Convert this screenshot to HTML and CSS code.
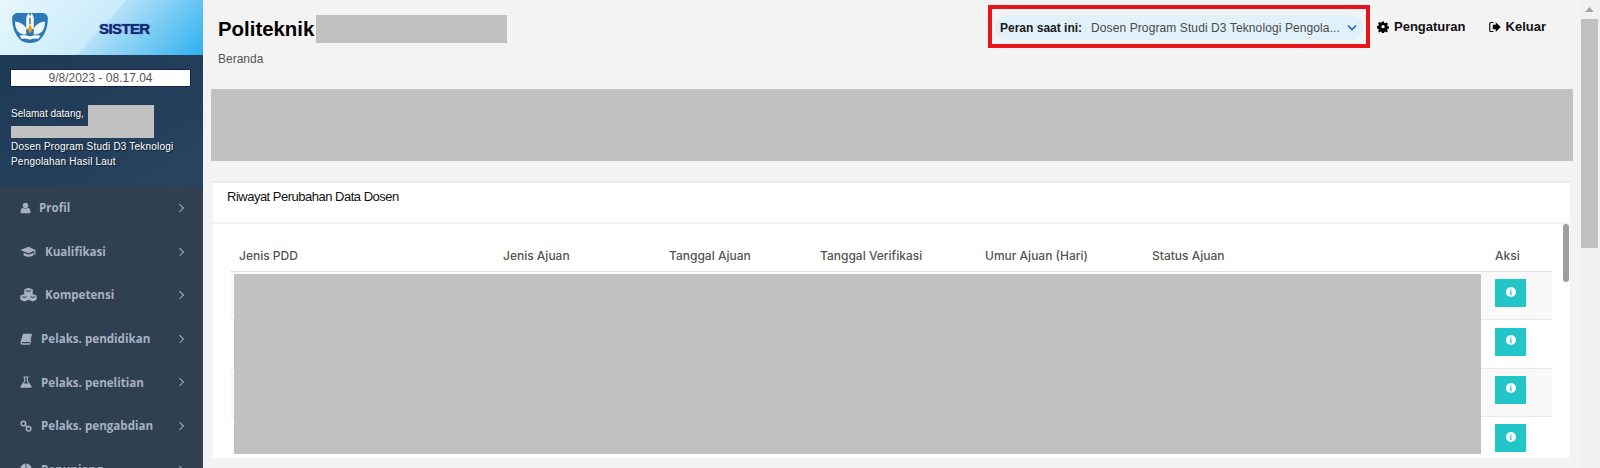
FILE: index.html
```html
<!DOCTYPE html>
<html lang="id">
<head>
<meta charset="utf-8">
<title>SISTER</title>
<link rel="stylesheet" href="styles.css">
</head>
<body>
<aside class="sidebar">
  <div class="brand">
    <svg class="logo" viewBox="0 0 40 34">
      <path fill="#2a78b8" d="M6 1h28q5 1 5 6 0 14-8 22-4 4-11 4T9 29Q1 21 1 7q0-5 5-6z"/>
      <path fill="#f4f6f0" d="M18 1l2 3 2-3 2 5v12h-8V6z"/>
      <path fill="#1f4f80" d="M19.400 6h1.200v7h-1.200z"/>
      <path fill="#eef4f8" d="M4 10q7 0 12 7v7q-7 0-10-5-2-4-2-9zM36 10q-7 0-12 7v7q7 0 10-5 2-4 2-9z"/>
      <path fill="#f0a020" d="M20 13l2.500 5-2.500 5-2.500-5z"/>
      <path fill="#fff" d="M9 25q6-1 11 1 5-2 11-1l-2 3.500q-5-1-9 1-4-2-9-1z"/>
    </svg>
    <span class="brand-name">SISTER</span>
  </div>
  <div class="user-panel">
    <div class="clock">9/8/2023 - 08.17.04</div>
    <div class="welcome">Selamat datang,<span class="redact redact-name"></span></div>
    <div class="redact redact-name2"></div>
    <div class="role">Dosen Program Studi D3 Teknologi Pengolahan Hasil Laut</div>
  </div>
  <nav class="menu">
    <a class="item"><svg class="ic" viewBox="0 0 16 16"><circle cx="8" cy="4.500" r="4"/><path d="M1 15.500V12q0-4 3.500-4.500 3.500 2.500 7 0Q15 8 15 12v3.500z"/></svg><span class="lbl l1">Profil</span><span class="chev"></span></a>
    <a class="item"><svg class="ic wide" viewBox="0 0 20 16"><path d="M10 2L0 6l10 4 7-3v5h1.500V6zM4 9.500V13q6 3 12 0V9.500l-6 2.500z"/></svg><span class="lbl l2">Kualifikasi</span><span class="chev"></span></a>
    <a class="item"><svg class="ic wide cubes" viewBox="0 0 20 16"><path d="M10 .2l5 1.900v5.200l-5 1.900-5-1.900V2.100zM5.200 7.500l4.800 1.800v5l-4.800 1.800L.4 14.300v-5zM14.800 7.500l4.800 1.800v5l-4.800 1.800-4.800-1.800v-5z"/><path d="M7 3.300l3 1.100 3-1.100M2.500 10.500l2.700 1 2.700-1M12 10.500l2.800 1 2.800-1" fill="none" stroke="#2f4050" stroke-width="1.200"/></svg><span class="lbl l2b">Kompetensi</span><span class="chev"></span></a>
    <a class="item"><svg class="ic" viewBox="0 0 16 16"><path d="M4 1h12l-2.500 11H3.500q-1 0-1 .8t1 .7H13l1-3 1.500-.5L13 15.500H3Q0.300 15.500 .8 12z"/></svg><span class="lbl l3">Pelaks. pendidikan</span><span class="chev"></span></a>
    <a class="item"><svg class="ic" viewBox="0 0 16 16"><path d="M4.500 .5h7V2h-1v4.500l5 7.500q.5 1.500-1 1.500H1.500q-1.500 0-1-1.500l5-7.500V2h-1zM7 2v5l-2 3h6L9 7V2z" fill-rule="evenodd"/></svg><span class="lbl l3">Pelaks. penelitian</span><span class="chev"></span></a>
    <a class="item"><svg class="ic" viewBox="0 0 16 16"><g fill="none" stroke="currentColor" stroke-width="2"><circle cx="4.500" cy="4.500" r="3"/><circle cx="11.500" cy="11.500" r="3"/><path d="M6.500 6.500l3 3"/></g></svg><span class="lbl l3">Pelaks. pengabdian</span><span class="chev"></span></a>
    <a class="item"><svg class="ic" viewBox="0 0 16 16"><circle cx="8" cy="8" r="7.500"/><path d="M1 8h14M8 1v14" stroke="#2f4050" fill="none"/></svg><span class="lbl l3">Penunjang</span><span class="chev"></span></a>
  </nav>
</aside>

<main class="main">
  <header class="topbar">
    <div class="titles">
      <h1 class="title">Politeknik<span class="redact redact-title"></span></h1>
      <div class="crumb">Beranda</div>
    </div>
    <div class="actions">
      <div class="role-outline">
        <div class="role-pill">
          <b class="role-label">Peran saat ini:</b>
          <span class="role-value">Dosen Program Studi D3 Teknologi Pengola...</span>
          <svg class="role-chev" viewBox="0 0 10 6"><path d="M1 1l4 4 4-4" fill="none" stroke="#1b6fc2" stroke-width="1.600"/></svg>
        </div>
      </div>
      <a class="action"><svg class="act-ic" viewBox="0 0 16 16"><path d="M6.700 1h2.600l.4 2 1.300.6 1.800-1.100 1.800 1.800-1.100 1.800.6 1.300 2 .4v2.600l-2 .4-.6 1.300 1.100 1.800-1.800 1.800-1.800-1.100-1.300.6-.4 2H6.700l-.4-2-1.300-.6-1.800 1.100-1.800-1.800 1.100-1.800-.6-1.300-2-.4V7.100l2-.4.6-1.300-1.100-1.800 1.800-1.800L5 2.900l1.300-.6zM8 5.700a2.300 2.300 0 100 4.600 2.300 2.300 0 000-4.600z" fill-rule="evenodd" transform="translate(0 -.5)"/></svg>Pengaturan</a>
      <a class="action"><svg class="act-ic" viewBox="0 0 16 16"><path d="M9 4V1.500l6.500 6.500L9 14.500V11H5V5h4z"/><path d="M6 2H2.500Q1 2 1 3.500v9Q1 14 2.500 14H6" fill="none" stroke="#000" stroke-width="1.500"/></svg>Keluar</a>
    </div>
  </header>

  <div class="banner redact"></div>

  <section class="card">
    <h2 class="card-title">Riwayat Perubahan Data Dosen</h2>
    <div class="card-body">
      <div class="grid-table">
        <div class="row head">
          <span class="c1">Jenis PDD</span><span class="c2">Jenis Ajuan</span><span class="c3">Tanggal Ajuan</span><span class="c4">Tanggal Verifikasi</span><span class="c5">Umur Ajuan (Hari)</span><span class="c6">Status Ajuan</span><span class="c7">Aksi</span>
        </div>
        <div class="row odd"><span class="c8"></span><a class="info"><span class="info-i">i</span></a></div>
        <div class="row"><span class="c8"></span><a class="info"><span class="info-i">i</span></a></div>
        <div class="row odd"><span class="c8"></span><a class="info"><span class="info-i">i</span></a></div>
        <div class="row"><span class="c8"></span><a class="info"><span class="info-i">i</span></a></div>
        <div class="redact table-redact"></div>
      </div>
      <div class="inner-thumb"></div>
    </div>
  </section>
</main>

<div class="page-scroll">
  <svg class="arrow" viewBox="0 0 10 6"><path d="M5 0l5 6H0z" fill="#a3a3a3"/></svg>
  <div class="page-thumb"></div>
</div>
</body>
</html>
```
FILE: styles.css
```css
* { box-sizing: border-box; }
html, body { margin: 0; height: 468px; overflow: hidden; }
body {
  display: flex;
  background: #f3f3f4;
  font-family: "Liberation Sans", Arial, sans-serif;
  color: #000;
}
.redact { background: #c1c1c1; }

/* sidebar */
.sidebar {
  width: 203px;
  flex: none;
  height: 468px;
  overflow: hidden;
  background: #2f4050;
}
.brand {
  height: 55px;
  display: flex;
  align-items: center;
  padding: 0 0 0 11px;
  background: linear-gradient(132deg, #e8f7fd 0%, #c9ebfa 50%, #b4e1f8 50.3%, #2eb0ee 100%);
}
.logo { width: 38px; height: 32px; }
.brand-name {
  margin-left: 50px;
  margin-top: 1px;
  font-size: 15px;
  font-weight: 700;
  letter-spacing: -0.6px;
  color: #1a2a78;
  text-shadow: 0 0 1px #1a2a78;
}
.user-panel {
  height: 131px;
  padding: 14px 10px 0 10px;
  background: linear-gradient(150deg, #1f3a55 0%, #233f5c 60%, #2a4562 100%);
  color: #fff;
  font-size: 10px;
  line-height: 15px;
  text-shadow: 1px 1px 1px rgba(0, 0, 0, .6);
}
.clock {
  height: 18px;
  width: 181px;
  background: #fff;
  border: 1px solid #12264a;
  color: #555;
  font-size: 12px;
  line-height: 16px;
  text-align: center;
  text-shadow: none;
}
.welcome {
  display: flex;
  align-items: flex-start;
  margin-top: 18px;
  padding-left: 1px;
  height: 21px;
  line-height: 17px;
}
.redact-name { width: 66px; height: 21px; margin-left: 4px; }
.redact-name2 { width: 143px; height: 12px; margin-left: 1px; }
.role { margin: 1px 0 0 1px; width: 176px; letter-spacing: .2px; }

.menu { padding-top: 0; }
.item {
  display: flex;
  align-items: center;
  height: 43.6px;
  padding-left: 20px;
  position: relative;
  color: #a7b1c2;
  font-family: "Open Sans", "Noto Sans", sans-serif;
  font-size: 11.6px;
  font-weight: 700;
  white-space: nowrap;
}
.ic { width: 11px; height: 12px; fill: currentColor; flex: none; }
.ic.wide { width: 17px; height: 13px; }
.ic.cubes { width: 17px; height: 15px; }
.lbl { margin-left: 8px; }
.l2 { margin-left: 8px; }
.l2b { margin-left: 8px; }
.l3 { margin-left: 9px; }
.item:nth-child(4) .ic, .item:nth-child(5) .ic, .item:nth-child(6) .ic, .item:nth-child(7) .ic { width: 12px; }
.chev {
  position: absolute;
  right: 21px;
  top: 19px;
  width: 5.5px;
  height: 5.5px;
  border-top: 1px solid #a7b1c2;
  border-right: 1px solid #a7b1c2;
  transform: rotate(45deg);
}

/* main */
.main {
  flex: 1;
  min-width: 0;
  padding: 0 6px 0 8px;
  display: flex;
  flex-direction: column;
}
.topbar {
  height: 89px;
  display: flex;
  justify-content: space-between;
  align-items: flex-start;
  flex: none;
  padding-left: 7px;
}
.titles { padding-top: 15px; }
.title {
  margin: 0;
  display: flex;
  align-items: center;
  height: 28px;
  font-size: 20.4px;
  font-weight: 700;
  line-height: 28px;
}
.redact-title { width: 191px; height: 28px; margin-left: 2px; }
.crumb { margin-top: 9px; font-size: 12px; line-height: 14px; color: #555; }
.actions { display: flex; align-items: center; padding-top: 5px; margin-right: 27px; }
.role-outline {
  width: 382px;
  height: 43px;
  padding: 6px 3px;
  border: 4px solid #e8141c;
}
.role-pill {
  display: flex;
  align-items: center;
  height: 25px;
  padding: 0 5px;
  border-radius: 13px;
  background: #e1f1f9;
  font-size: 12px;
  white-space: nowrap;
}
.role-label { color: #1a1a1a; }
.role-value { margin-left: 9px; color: #4a4a4a; letter-spacing: .1px; }
.role-chev { width: 10px; height: 7px; margin-left: auto; margin-right: 1px; }
.action {
  display: flex;
  align-items: center;
  margin-left: 7px;
  font-size: 13px;
  font-weight: 700;
  color: #111;
}
.action + .action { margin-left: 23px; }
.act-ic { width: 12px; height: 12px; margin-right: 5px; fill: #000; }

.banner { height: 72px; flex: none; }

.card {
  margin: 20px 0 0 2px;
  width: 1357px;
  height: 277px;
  flex: none;
  position: relative;
  background: #fff;
  border-top: 2px solid #e7eaec;
}
.card-title {
  margin: 0;
  height: 41px;
  padding: 6px 14px 0;
  border-bottom: 2px solid #f3f3f3;
  font-size: 13px;
  font-weight: 400;
  letter-spacing: -.5px;
  line-height: 16px;
  color: #111;
}
.card-body { position: relative; padding: 0 18px; height: 234px; overflow: hidden; }
.grid-table { position: relative; width: 1321px; }
.row {
  display: flex;
  align-items: center;
  height: 48.4px;
  border-bottom: 1px solid #e7eaec;
  font-family: "Inter", "Noto Sans", sans-serif;
  font-size: 12px;
  color: #555;
}
.row.odd { background: #f9f9f9; }
.row.head {
  height: 48px;
  padding-top: 15px;
  font-weight: 500;
  border-bottom: 1px solid #dcdcdc;
}
.row.head span { flex: none; }
.c1 { width: 272px; padding-left: 8px; }
.c2 { width: 166px; }
.c3 { width: 151px; }
.c4 { width: 165px; }
.c5 { width: 167px; }
.c6 { width: 343px; }
.c7 { width: 46px; }
.c8 { width: 1264px; }
.info {
  width: 31px;
  height: 28px;
  margin-top: -5px;
  background: #23c6c8;
  display: flex;
  align-items: center;
  justify-content: center;
}
.info-i {
  width: 10px;
  height: 10px;
  margin-top: -3px;
  border-radius: 50%;
  background: #fff;
  color: #23c6c8;
  font: 700 9px/10px "Liberation Serif", serif;
  text-align: center;
}
.table-redact {
  position: absolute;
  left: 3px;
  top: 50px;
  width: 1247px;
  height: 180px;
}
.inner-thumb {
  position: absolute;
  right: 1px;
  top: 0;
  width: 6.5px;
  height: 58px;
  border-radius: 4px;
  background: #9e9e9e;
}

/* page scrollbar */
.page-scroll {
  width: 21px;
  flex: none;
  height: 468px;
  display: flex;
  flex-direction: column;
  align-items: center;
  background: #f1f1f1;
}
.arrow { width: 9px; height: 5px; margin-top: 7px; }
.page-thumb { width: 17px; height: 229px; margin-top: 7px; background: #c1c1c1; }
```
